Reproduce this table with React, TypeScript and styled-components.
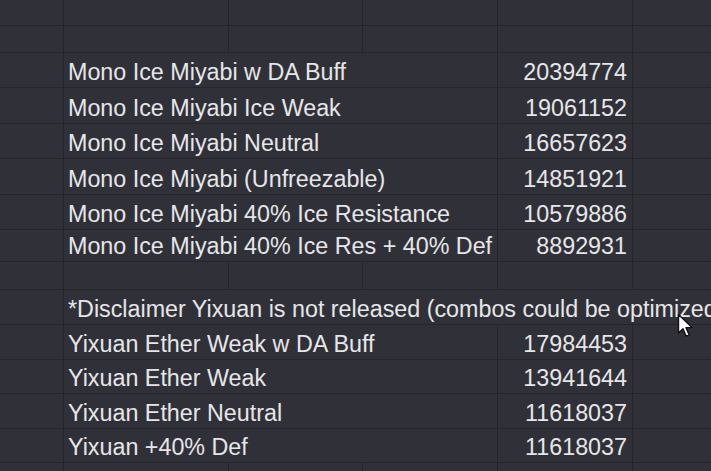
import React from 'react';
import styled, { createGlobalStyle } from 'styled-components';

const GlobalStyle = createGlobalStyle`
  html, body {
    margin: 0;
    padding: 0;
    background: #303138;
    overflow: hidden;
  }
`;

type Entry = { label?: string; value?: string; h: number; wide?: boolean };

const rows: Entry[] = [
  { h: 26 },
  { h: 27 },
  { label: 'Mono Ice Miyabi w DA Buff', value: '20394774', h: 35 },
  { label: 'Mono Ice Miyabi Ice Weak', value: '19061152', h: 36 },
  { label: 'Mono Ice Miyabi Neutral', value: '16657623', h: 35 },
  { label: 'Mono Ice Miyabi (Unfreezable)', value: '14851921', h: 36 },
  { label: 'Mono Ice Miyabi 40% Ice Resistance', value: '10579886', h: 35 },
  { label: 'Mono Ice Miyabi 40% Ice Res + 40% Def', value: '8892931', h: 32 },
  { h: 28 },
  { label: '*Disclaimer Yixuan is not released (combos could be optimized)', h: 35, wide: true },
  { label: 'Yixuan Ether Weak w DA Buff', value: '17984453', h: 35 },
  { label: 'Yixuan Ether Weak', value: '13941644', h: 34 },
  { label: 'Yixuan Ether Neutral', value: '11618037', h: 35 },
  { label: 'Yixuan +40% Def', value: '11618037', h: 34 },
  { h: 30 },
];

const App = () => {
  return (
    <>
      <GlobalStyle />
      <Sheet>
        {rows.map((r, i) => (
          <Row key={i} $h={r.h}>
            <Cell />
            {r.label === undefined ? (
              <>
                <Cell />
                <Cell />
                <Cell />
                <Cell />
                <Cell $last />
              </>
            ) : r.wide ? (
              <Cell $span={5} $last>
                {r.label}
              </Cell>
            ) : (
              <>
                <Cell $span={3}>{r.label}</Cell>
                <Cell $right>{r.value}</Cell>
                <Cell $last />
              </>
            )}
          </Row>
        ))}
        <Pointer width="16" height="26" viewBox="0 0 16 26">
          <path
            d="M1.5 1.5 L1.5 20 L6 15.8 L9.2 23.2 L12.2 21.9 L9 14.6 L15 14.6 Z"
            fill="#ffffff"
            stroke="#111111"
            strokeWidth="1.4"
            strokeLinejoin="round"
          />
        </Pointer>
      </Sheet>
    </>
  );
};

export default App;

const Sheet = styled.div`
  position: relative;
  width: 711px;
  height: 471px;
  overflow: hidden;
  background: #303138;
  font-family: 'Liberation Sans', Arial, sans-serif;
  font-size: 23.3px;
  color: #e6e6e8;
`;

const Row = styled.div<{ $h: number }>`
  display: grid;
  grid-template-columns: 64px 165px 134px 135px 135px 1fr;
  height: ${({ $h }) => $h}px;
  box-sizing: border-box;
  border-bottom: 1px solid #25262b;
`;

const Cell = styled.div<{ $span?: number; $right?: boolean; $last?: boolean }>`
  grid-column: span ${({ $span }) => $span ?? 1};
  min-width: 0;
  display: flex;
  align-items: flex-end;
  justify-content: ${({ $right }) => ($right ? 'flex-end' : 'flex-start')};
  padding: 0 5px 2px 4px;
  box-sizing: border-box;
  border-right: ${({ $last }) => ($last ? 'none' : '1px solid #25262b')};
  white-space: nowrap;
  overflow: visible;
  line-height: 26px;
`;

const Pointer = styled.svg`
  position: absolute;
  left: 677px;
  top: 313px;
`;
